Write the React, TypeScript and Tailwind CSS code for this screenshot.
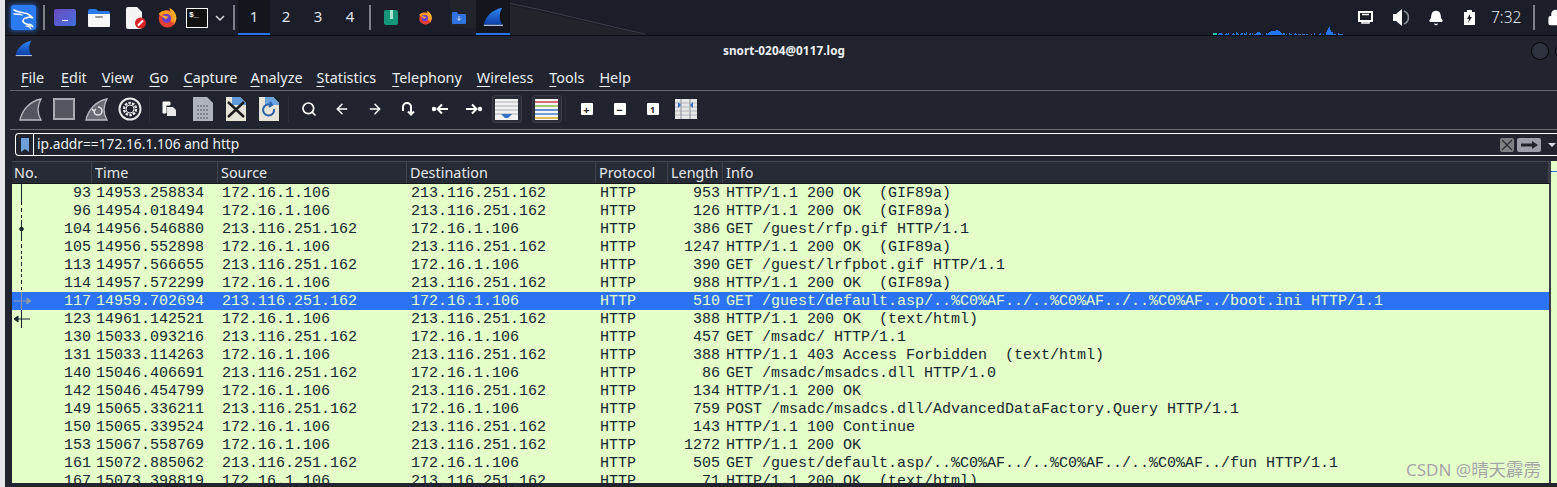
import { ArrowLeft, ArrowRight, Bell, Lock, Search } from "lucide-react";
import type { ReactNode } from "react";

type Gutter = "line" | "dash" | "dot" | "req" | "resp" | "none";

type Packet = {
  no: number;
  time: string;
  src: string;
  dst: string;
  len: number;
  info: string;
  gutter: Gutter;
};

const A = "172.16.1.106";
const B = "213.116.251.162";

const PACKETS: Packet[] = [
  { no: 93, time: "14953.258834", src: A, dst: B, len: 953, info: "HTTP/1.1 200 OK  (GIF89a)", gutter: "line" },
  { no: 96, time: "14954.018494", src: A, dst: B, len: 126, info: "HTTP/1.1 200 OK  (GIF89a)", gutter: "dash" },
  { no: 104, time: "14956.546880", src: B, dst: A, len: 386, info: "GET /guest/rfp.gif HTTP/1.1", gutter: "dot" },
  { no: 105, time: "14956.552898", src: A, dst: B, len: 1247, info: "HTTP/1.1 200 OK  (GIF89a)", gutter: "dash" },
  { no: 113, time: "14957.566655", src: B, dst: A, len: 390, info: "GET /guest/lrfpbot.gif HTTP/1.1", gutter: "dash" },
  { no: 114, time: "14957.572299", src: A, dst: B, len: 988, info: "HTTP/1.1 200 OK  (GIF89a)", gutter: "dash" },
  { no: 117, time: "14959.702694", src: B, dst: A, len: 510, info: "GET /guest/default.asp/..%C0%AF../..%C0%AF../..%C0%AF../boot.ini HTTP/1.1", gutter: "req" },
  { no: 123, time: "14961.142521", src: A, dst: B, len: 388, info: "HTTP/1.1 200 OK  (text/html)", gutter: "resp" },
  { no: 130, time: "15033.093216", src: B, dst: A, len: 457, info: "GET /msadc/ HTTP/1.1", gutter: "none" },
  { no: 131, time: "15033.114263", src: A, dst: B, len: 388, info: "HTTP/1.1 403 Access Forbidden  (text/html)", gutter: "none" },
  { no: 140, time: "15046.406691", src: B, dst: A, len: 86, info: "GET /msadc/msadcs.dll HTTP/1.0", gutter: "none" },
  { no: 142, time: "15046.454799", src: A, dst: B, len: 134, info: "HTTP/1.1 200 OK", gutter: "none" },
  { no: 149, time: "15065.336211", src: B, dst: A, len: 759, info: "POST /msadc/msadcs.dll/AdvancedDataFactory.Query HTTP/1.1", gutter: "none" },
  { no: 150, time: "15065.339524", src: A, dst: B, len: 143, info: "HTTP/1.1 100 Continue", gutter: "none" },
  { no: 153, time: "15067.558769", src: A, dst: B, len: 1272, info: "HTTP/1.1 200 OK", gutter: "none" },
  { no: 161, time: "15072.885062", src: B, dst: A, len: 505, info: "GET /guest/default.asp/..%C0%AF../..%C0%AF../..%C0%AF../fun HTTP/1.1", gutter: "none" },
  { no: 167, time: "15073.398819", src: A, dst: B, len: 71, info: "HTTP/1.1 200 OK  (text/html)", gutter: "none" },
];

// gap holds the distance to the previous menu item, the picture's spacing is not quite even
const MENU = [
  { label: "File", gap: "" },
  { label: "Edit", gap: "ml-[17px]" },
  { label: "View", gap: "ml-[15px]" },
  { label: "Go", gap: "ml-[16px]" },
  { label: "Capture", gap: "ml-[15px]" },
  { label: "Analyze", gap: "ml-[13px]" },
  { label: "Statistics", gap: "ml-[14px]" },
  { label: "Telephony", gap: "ml-[16px]" },
  { label: "Wireless", gap: "ml-[15px]" },
  { label: "Tools", gap: "ml-[16px]" },
  { label: "Help", gap: "ml-[15px]" },
];

const COLUMNS = [
  { label: "No.", width: "w-[80px] pl-[2px]" },
  { label: "Time", width: "w-[126px] pl-[3px]" },
  { label: "Source", width: "w-[189px] pl-[3px]" },
  { label: "Destination", width: "w-[189px] pl-[3px]" },
  { label: "Protocol", width: "w-[72px] pl-[3px]" },
  { label: "Length", width: "w-[55px] pl-[3px]" },
  { label: "Info", width: "flex-1 pl-[3px]" },
];

// per-pixel heights of the little network graph in the panel
const GRAPH = "000001222100121200012103210122021300120201123332010002123344444554432122010021100121011101110110001002000012001003578533111002111100022".split("");

function Fin({ size = 22 }: { size?: number }) {
  return (
    <svg width={size} height={size} viewBox="0 0 24 24">
      <defs>
        <linearGradient id="finBlue" x1="0" y1="0" x2="0" y2="1">
          <stop offset="0" stopColor="#2f86f2" />
          <stop offset="1" stopColor="#0b3fa8" />
        </linearGradient>
      </defs>
      <path d="M1 21C3 11 12 3 23 1c-4 7-4 14 0 20z" fill="url(#finBlue)" />
      <path d="M1 22h23" stroke="#b8c8e4" strokeWidth="1.500" />
    </svg>
  );
}

function Firefox({ size = 21 }: { size?: number }) {
  return (
    <svg width={size} height={size} viewBox="0 0 24 24">
      <circle cx="12" cy="13.500" r="10" fill="#e8412f" />
      <path d="M14 1c5 2 9 7 8 13-1 3-2 5-3 6 1-5 0-9-3-11 0-3-1-6-2-8z" fill="#ffb12a" />
      <path d="M3 9c3-3 7-4 11-2 4 2 5 7 3 10" stroke="#ff9a1f" strokeWidth="3.500" fill="none" />
      <circle cx="11" cy="13" r="5" fill="#6a3fd0" />
      <path d="M4 9l9 2-3 3z" fill="#ffb12a" />
    </svg>
  );
}

function TopSeparator() {
  return <div className="h-[25px] w-[2px] shrink-0 bg-[#7d8088]" />;
}

function Workspace({ label, active }: { label: string; active?: boolean }) {
  return (
    <div className={`flex h-[35px] w-[32px] items-center justify-center border-b-[2px] text-[15px] text-[#dfe2ea] ${active ? "border-[#2a73e8] bg-[#14161e]" : "border-transparent"}`}>
      {label}
    </div>
  );
}

function TopBar() {
  return (
    <div className="relative flex h-[35px] shrink-0 items-center overflow-hidden bg-[#1b1d28] [&>*]:shrink-0">
      {/* wallpaper curve behind the panel */}
      <svg className="absolute left-[445px] top-0 h-[35px] w-[200px]" viewBox="0 0 200 35">
        <path d="M30 0c50 8 100 22 165 35H60C40 30 15 27 0 26V0z" fill="#22242c" />
        <path d="M40 0c50 8 95 21 155 34" stroke="#3b3d46" fill="none" />
      </svg>
      <div className="relative ml-[6px] flex h-[25px] w-[25px] items-center justify-center rounded-[3px] bg-[#2a7bf2] shadow-[0_0_5px_#2a7bf2]">
        <svg width="24" height="24" viewBox="0 0 24 24" fill="none" stroke="white" strokeLinecap="round">
          <path d="M2 4c3 2 6 2 10 3 3 0 6 2 9 5-2-1-5-1-7 0-2 0-3 2-3 3 0 3 5 3 8 5" strokeWidth="1.600" />
          <path d="M2 8c3 0 6 0 8 1" strokeWidth="1.300" />
          <path d="M14 20c2 0 4 1 5 3M17 18c2 0 3 1 4 3" strokeWidth="1.100" />
        </svg>
      </div>
      <div className="ml-[7px]"><TopSeparator /></div>
      <div className="ml-[9px] h-[17px] w-[22px] rounded-[2px] bg-gradient-to-br from-[#6a48c0] to-[#3a70dc] pt-[11px]">
        <div className="mx-auto h-[1px] w-[6px] bg-white" />
      </div>
      <svg className="ml-[12px]" width="22" height="19" viewBox="0 0 22 19">
        <path d="M0 3a2 2 0 0 1 2-2h6l2 2h10a2 2 0 0 1 2 2v2H0z" fill="#2a7be8" />
        <path d="M0 6h22v12a1 1 0 0 1-1 1H1a1 1 0 0 1-1-1z" fill="#f6f6f6" />
        <rect x="7" y="8" width="8" height="2" rx="1" fill="#9a9a9a" />
      </svg>
      <svg className="ml-[15px]" width="22" height="22" viewBox="0 0 22 22">
        <path d="M1 2a2 2 0 0 1 2-2h9l5 5v15a2 2 0 0 1-2 2H3a2 2 0 0 1-2-2z" fill="#f4f4f4" />
        <circle cx="15.500" cy="16" r="5.500" fill="#d8232a" />
        <path d="M13 18.500l5-5" stroke="white" strokeWidth="2" />
      </svg>
      <div className="ml-[10px]"><Firefox /></div>
      <div className="ml-[8px] h-[20px] w-[22px] border border-white bg-[#111] pl-[2px] font-['Liberation_Mono',monospace] text-[8px] font-bold leading-[11px] text-white">$_</div>
      <svg className="ml-[6px]" width="12" height="12" viewBox="0 0 12 12" fill="none" stroke="#d8dae0" strokeWidth="1.500">
        <path d="M2 4l4 4 4-4" />
      </svg>
      <div className="ml-[7px]"><TopSeparator /></div>
      <div className="ml-[3px] flex">
        <Workspace label="1" active />
        <Workspace label="2" />
        <Workspace label="3" />
        <Workspace label="4" />
      </div>
      <div className="ml-[3px]"><TopSeparator /></div>
      <div className="relative ml-[13px] h-[15px] w-[14px] rounded-[2px] bg-[#16967a]">
        <div className="mx-auto h-[9px] w-[3px] bg-[#a9e4d5]" />
      </div>
      <div className="relative ml-[20px]"><Firefox size={15} /></div>
      <svg className="relative ml-[19px]" width="14" height="12" viewBox="0 0 14 12">
        <path d="M0 1a1 1 0 0 1 1-1h4l1 2h7a1 1 0 0 1 1 1v8a1 1 0 0 1-1 1H1a1 1 0 0 1-1-1z" fill="#2f72e0" />
        <path d="M7 4v4M5 6.500l2 2 2-2" stroke="#cfe0ff" fill="none" />
      </svg>
      <div className="relative ml-[10px] flex h-[35px] w-[34px] items-center justify-center border-b-[2px] border-[#2a73e8] bg-[#14161e]">
        <Fin size={20} />
      </div>
      <svg className="relative ml-[703px] mt-[25px]" width="133" height="9" viewBox="0 0 133 9">
        {GRAPH.map((h, i) => (
          <rect key={i} x={i} y={9 - Number(h)} width="1" height={Number(h)} fill="#2477f0" />
        ))}
        <rect x="0" y="7" width="4" height="2" fill="#1fc4a8" />
      </svg>
      <svg className="relative ml-[12px]" width="15" height="13" viewBox="0 0 15 13" fill="none" stroke="white" strokeWidth="2">
        <rect x="1" y="1" width="13" height="9" />
        <path d="M4 10v2h7v-2M4 3.500h7" strokeWidth="1.500" />
      </svg>
      <svg className="relative ml-[20px]" width="17" height="17" viewBox="0 0 17 17">
        <path d="M0 5h3l6-5v17l-6-5H0z" fill="white" />
        <path d="M11 2a7 7 0 0 1 0 13" stroke="#8d9097" strokeWidth="1.600" fill="none" />
      </svg>
      <Bell className="relative ml-[18px]" size={16} fill="white" stroke="white" />
      <svg className="relative ml-[20px]" width="11" height="15" viewBox="0 0 11 15">
        <path d="M3 0h5v2h3v13H0V2h3z" fill="white" />
        <path d="M6 4L3 9h2l-1 4 4-6H6z" fill="#1b1d28" />
      </svg>
      <span className="relative ml-[16px] text-[15.500px] font-light text-[#e4e7f0]">7:32</span>
      <div className="relative ml-[12px]"><TopSeparator /></div>
      <Lock className="relative ml-[12px]" size={17} fill="white" stroke="white" strokeWidth={2} />
    </div>
  );
}

function TitleBar() {
  return (
    <div className="relative flex h-[28px] shrink-0 items-center justify-center pt-[2px] text-[11.700px] font-bold text-[#eef0f4]">
      <div className="absolute left-[10px] top-[4px]"><Fin size={17} /></div>
      <span className="ml-[6px] tracking-[0.1px]">snort-0204@0117.log</span>
      <div className="absolute left-[1526px] top-[6px] h-[18px] w-[18px] rounded-full border border-black bg-[#2f3340]" />
      <div className="absolute left-[1550px] top-[6px] h-[18px] w-[18px] rounded-full border border-black bg-[#2f3340]" />
    </div>
  );
}

function MenuBar() {
  return (
    <div className="ml-[5px] flex h-[27px] shrink-0 items-center border-b border-[#60636a] pl-[11px] pt-[2px] text-[14.400px] text-[#eceef2]">
      {MENU.map((item) => (
        <span key={item.label} className={item.gap}>
          <span className="underline decoration-1 underline-offset-[3px]">{item.label[0]}</span>
          {item.label.slice(1)}
        </span>
      ))}
    </div>
  );
}

function Slot({ children }: { children: ReactNode }) {
  return <div className="flex h-[36px] w-[33px] shrink-0 items-center justify-center">{children}</div>;
}

function Toggle({ children, className = "" }: { children: ReactNode; className?: string }) {
  return (
    <div className={`flex h-[36px] w-[33px] shrink-0 items-center justify-center ${className}`}>
      <div className="flex h-[28px] w-[30px] items-center justify-center rounded-[3px] border border-[#3b3e48] bg-[#2a2d37]">{children}</div>
    </div>
  );
}

function ToolSeparator({ className }: { className: string }) {
  return <div className={`h-[26px] w-[1px] bg-[#2c2f39] ${className}`} />;
}

function Toolbar() {
  return (
    <div className="flex h-[38px] shrink-0 items-start pl-[9px]">
      <Slot>
        <svg width="23" height="23" viewBox="0 0 23 23">
          <path d="M1 22C3 12 11 3 22 1c-4 7-4 14 0 21z" fill="#54575f" stroke="#b8bbc2" strokeWidth="1.300" />
        </svg>
      </Slot>
      <Slot>
        <div className="h-[22px] w-[22px] border-[2px] border-[#a8abb2] bg-[#54575f]" />
      </Slot>
      <Slot>
        <svg width="23" height="23" viewBox="0 0 23 23" fill="none">
          <path d="M1 22C3 12 11 3 22 1c-4 7-4 14 0 21z" fill="#6a6d75" stroke="#b8bbc2" strokeWidth="1.300" />
          <path d="M9 13a4 4 0 1 0 4-4M9 13l-2-2M9 13l2-2" stroke="#dfe1e6" strokeWidth="1.600" />
        </svg>
      </Slot>
      <Slot>
        <svg width="24" height="24" viewBox="0 0 24 24" fill="none" stroke="#e8e8ea">
          <circle cx="12" cy="12" r="10.500" strokeWidth="2" />
          <circle cx="12" cy="12" r="6" strokeWidth="2.400" strokeDasharray="2.500 1.200" />
          <circle cx="12" cy="12" r="4" strokeWidth="1" />
        </svg>
      </Slot>
      <ToolSeparator className="mx-[3px] mt-[5px]" />
      <Slot>
        <svg width="15" height="16" viewBox="0 0 15 16">
          <path d="M1 1h7v3H4v8H1z" fill="white" stroke="white" />
          <path d="M5 6h6l3 3v6H5z" fill="#e8e8e8" />
        </svg>
      </Slot>
      <Slot>
        <svg width="20" height="24" viewBox="0 0 20 24">
          <path d="M0 0h14l6 6v18H0z" fill="#aeb3be" />
          <path d="M4 9h12M4 13h12M4 17h12M4 21h12" stroke="#7d828e" strokeWidth="2" strokeDasharray="2 1" />
        </svg>
      </Slot>
      <Slot>
        <svg width="20" height="24" viewBox="0 0 20 24">
          <path d="M0 0h14l6 6v18H0z" fill="#e6e4d8" />
          <path d="M6 0h8l6 6v2H6z" fill="#5f9bd8" />
          <path d="M2 5l16 15M18 5L2 20" stroke="#1c1c1c" strokeWidth="2.500" />
        </svg>
      </Slot>
      <Slot>
        <svg width="20" height="24" viewBox="0 0 20 24" fill="none">
          <path d="M0 0h14l6 6v18H0z" fill="#e6e4d8" />
          <path d="M6 0h8l6 6v2H6z" fill="#6aa5e0" />
          <path d="M15 12a5.500 5.500 0 1 1-3-4M11 5l2 3-3 2" stroke="#2a5ea8" strokeWidth="2" />
        </svg>
      </Slot>
      <ToolSeparator className="ml-[3px] mr-[3px] mt-[5px]" />
      <Slot><Search size={16} stroke="white" strokeWidth={2.500} /></Slot>
      <Slot><ArrowLeft size={16} stroke="white" strokeWidth={2.200} /></Slot>
      <Slot><ArrowRight size={16} stroke="white" strokeWidth={2.200} /></Slot>
      <Slot>
        <svg width="16" height="16" viewBox="0 0 16 16" fill="none" stroke="white" strokeWidth="2">
          <path d="M3 10V6a4 4 0 0 1 8 0v7M8 10.500l3 3 3-3" />
        </svg>
      </Slot>
      <Slot>
        <svg width="17" height="16" viewBox="0 0 17 16" fill="none" stroke="white" strokeWidth="2">
          <circle cx="2" cy="8" r="1.200" fill="white" />
          <path d="M16 8H6M10 3.500L5.500 8l4.500 4.500" />
        </svg>
      </Slot>
      <Slot>
        <svg width="17" height="16" viewBox="0 0 17 16" fill="none" stroke="white" strokeWidth="2">
          <circle cx="15" cy="8" r="1.200" fill="white" />
          <path d="M1 8h10M7 3.500L11.500 8 7 12.500" />
        </svg>
      </Slot>
      <Toggle>
        <svg width="23" height="21" viewBox="0 0 23 21">
          <rect width="23" height="21" fill="#f2f2f2" />
          <path d="M0 3h23M0 7h23M0 11h23M0 15h23" stroke="#a9acb2" />
          <path d="M6 15h11l-4 4h-3z" fill="#2f6fc4" />
        </svg>
      </Toggle>
      <Toggle className="ml-[7px]">
        <svg width="23" height="21" viewBox="0 0 23 21">
          <rect width="23" height="21" fill="#f6f6f6" />
          <path d="M0 3h23" stroke="#c8303a" strokeWidth="1.400" />
          <path d="M0 7h23" stroke="#7fb83a" strokeWidth="1.400" />
          <path d="M0 11h23" stroke="#2f5fc0" strokeWidth="1.400" />
          <path d="M0 15h23" stroke="#3c78c8" strokeWidth="1.400" />
          <path d="M0 19h23" stroke="#d8a520" strokeWidth="1.400" />
        </svg>
      </Toggle>
      <ToolSeparator className="ml-[2px] mr-[4px] mt-[5px]" />
      <Slot>
        <div className="flex h-[12px] w-[12px] items-center justify-center rounded-[1px] bg-white text-[11px] font-bold leading-none text-[#222]">+</div>
      </Slot>
      <Slot>
        <div className="flex h-[12px] w-[12px] items-center justify-center rounded-[1px] bg-white text-[11px] font-bold leading-none text-[#222]">−</div>
      </Slot>
      <Slot>
        <div className="flex h-[12px] w-[12px] items-center justify-center rounded-[1px] bg-white text-[9px] font-bold leading-none text-[#222]">1</div>
      </Slot>
      <Slot>
        <svg width="22" height="20" viewBox="0 0 22 20">
          <rect width="22" height="20" fill="#e6e6e6" />
          <path d="M0 4h22M0 8h22M0 12h22M0 16h22" stroke="#b5b8be" />
          <path d="M6 0v20M15 0v20" stroke="#8d9096" />
          <path d="M3 3v6l3-3zM18 3v6l-3-3z" fill="#2f6fc4" />
        </svg>
      </Slot>
    </div>
  );
}

function FilterBar() {
  return (
    <div className="ml-[10px] mt-[3px] flex h-[23px] shrink-0 items-center rounded-l-[4px] border-y border-l border-white">
      <div className="flex h-full w-[18px] items-center justify-center border-r border-white">
        <svg width="8" height="14" viewBox="0 0 8 14">
          <path d="M0 0h8v14L4 11l-4 3z" fill="#6d9fd8" />
        </svg>
      </div>
      <span className="ml-[3px] flex-1 text-[13.750px] text-[#eef0f4]">ip.addr==172.16.1.106 and http</span>
      <div className="flex h-[14px] w-[14px] items-center justify-center rounded-[2px] bg-[#7e8084]">
        <svg width="12" height="12" viewBox="0 0 12 12" stroke="#2b2d33" strokeWidth="1.300">
          <path d="M1 1l10 10M11 1L1 11" />
        </svg>
      </div>
      <div className="ml-[3px] flex h-[14px] w-[24px] items-center justify-center rounded-[2px] bg-[#9b9ea8]">
        <svg width="17" height="8" viewBox="0 0 17 8">
          <path d="M0 2.500h11V0l6 4-6 4V5.500H0z" fill="#23252d" />
        </svg>
      </div>
      <div className="ml-[7px] mr-[1px] h-0 w-0 border-x-[4px] border-t-[4px] border-x-transparent border-t-[#d8dae0]" />
    </div>
  );
}

function GutterMark({ kind, selected }: { kind: Gutter; selected: boolean }) {
  if (kind === "none") return null;
  const color = selected ? "#8f9aa8" : "#12272e";
  return (
    <svg className="absolute left-0 top-0" width="20" height="18" viewBox="0 0 20 18" fill="none" stroke={color}>
      {kind === "line" && <path d="M9.500 0v18" />}
      {kind === "dash" && <path d="M9.500 0v3M9.500 6v4M9.500 13v3" />}
      {kind === "dot" && <path d="M9.500 0v18" />}
      {kind === "dot" && <circle cx="9.500" cy="9" r="1.800" fill={color} />}
      {kind === "req" && <path d="M9.500 0v18M2 9h14" />}
      {kind === "req" && <path d="M15 6l4 3-4 3z" fill={color} />}
      {kind === "resp" && <path d="M9.500 0v18M6 9h12" />}
      {kind === "resp" && <path d="M6 6L2 9l4 3z" fill={color} />}
    </svg>
  );
}

function PacketRow({ packet }: { packet: Packet }) {
  const selected = packet.no === 117;
  return (
    <div className={`relative flex h-[18px] shrink-0 items-center whitespace-pre pt-[2px] ${selected ? "bg-[#2b72f5] text-[#e4ffc7]" : "text-[#12272e]"}`}>
      <GutterMark kind={packet.gutter} selected={selected} />
      <div className="w-[79px] text-right">{packet.no}</div>
      <div className="w-[126px] pl-[5px]">{packet.time}</div>
      <div className="w-[189px] pl-[5px]">{packet.src}</div>
      <div className="w-[190px] pl-[5px]">{packet.dst}</div>
      <div className="w-[71px] pl-[4px]">HTTP</div>
      <div className="w-[53px] text-right">{packet.len}</div>
      <div className="flex-1 pl-[6px]">{packet.info}</div>
    </div>
  );
}

function PacketList() {
  return (
    <div className="ml-[7px] mt-[5px] flex h-[322px] shrink-0 flex-col overflow-hidden">
      <div className="flex h-[23px] shrink-0">
        <div className="flex flex-1 border-y border-r-2 border-t-[#44474f] border-b-[#14161c] border-r-[#3a3d45] bg-[#272b35]">
          {COLUMNS.map((col) => (
            <div key={col.label} className={`flex items-center border-r border-[#3e424c] text-[14.400px] text-[#e6e8ec] ${col.width}`}>
              {col.label}
            </div>
          ))}
        </div>
        <div className="w-[6px] bg-[#e4ffc7] pt-[10px]">
          <div className="h-[1px] bg-[#2a73e8]" />
        </div>
      </div>
      <div className="relative flex flex-1 overflow-hidden bg-[#e4ffc7] font-['Liberation_Mono',monospace] text-[15px]">
        <div className="flex flex-1 flex-col border-r-2 border-[#3a3d45]">
          {PACKETS.map((packet) => (
            <PacketRow key={packet.no} packet={packet} />
          ))}
        </div>
        <div className="w-[6px]" />
        <div className="absolute left-[1394px] top-[275px] font-['Noto_Sans','Noto_Sans_CJK_SC',sans-serif] text-[17px] leading-[20px] text-[#a0a69b] [text-shadow:0_0_1px_#ffffff]">
          CSDN @<span className="text-[17.500px]">晴天霹雳</span>
        </div>
      </div>
    </div>
  );
}

export default function App() {
  return (
    <div className="flex h-[487px] w-[1557px] overflow-hidden bg-[#e6e6e8] font-['Noto_Sans','Noto_Sans_CJK_SC',sans-serif]">
      <div className="w-[5px] shrink-0" />
      <div className="flex w-[1552px] flex-col bg-[#21242e]">
        <TopBar />
        <div className="h-[1px] shrink-0 bg-[#0c0d12]" />
        <TitleBar />
        <MenuBar />
        <Toolbar />
        <div className="ml-[5px] h-[1px] shrink-0 bg-[#6b6e75]" />
        <FilterBar />
        <PacketList />
      </div>
    </div>
  );
}
